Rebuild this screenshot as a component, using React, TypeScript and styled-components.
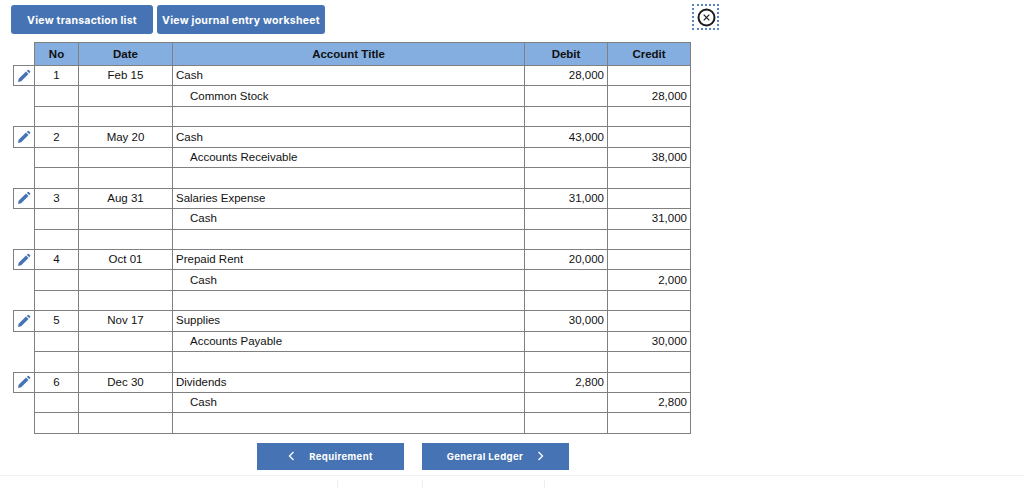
import React from 'react';
import styled, { createGlobalStyle } from 'styled-components';

const GlobalStyle = createGlobalStyle`
  html, body {
    margin: 0;
    padding: 0;
    background: #fff;
    font-family: 'Liberation Sans', Arial, sans-serif;
  }
`;

const Page = styled.div`
  width: 1024px;
  height: 488px;
  overflow: hidden;
  display: flex;
  flex-direction: column;
`;

const TopBar = styled.div`
  display: flex;
  align-items: flex-start;
  gap: 4px;
  padding: 5px 0 0 11px;
  height: 42px;
  box-sizing: border-box;
`;

const TopButton = styled.button<{ $w: number }>`
  width: ${(p) => p.$w}px;
  height: 29px;
  padding: 2px 0 0;
  border: none;
  border-radius: 3px;
  background: #4673b3;
  color: #fff;
  font-family: 'Inter', sans-serif;
  font-size: 10.5px;
  font-weight: 700;
  letter-spacing: 0.25px;
`;

const CloseBox = styled.button`
  width: 27px;
  height: 26px;
  margin: -1px 0 0 363px;
  padding: 0 0 0 1px;
  border: 2px dotted #5a86c0;
  background: #fff;
  display: flex;
  align-items: center;
  justify-content: center;
  box-sizing: border-box;
`;

const TableWrap = styled.div`
  padding-left: 13px;
`;

const Grid = styled.table`
  border-collapse: collapse;
  table-layout: fixed;
  width: 677px;
  font-size: 11.5px;
  color: #111;
`;

const Th = styled.th<{ $w: number }>`
  box-sizing: border-box;
  width: ${(p) => p.$w}px;
  height: 23px;
  padding: 0;
  background: #84aee0;
  border: 1px solid #808080;
  font-size: 11.5px;
  font-weight: 700;
  text-align: center;
`;

const Gutter = styled.th`
  box-sizing: border-box;
  width: 21px;
  padding: 0;
`;

const Row = styled.tr`
  height: 20.44px;
`;

const Td = styled.td<{ $align?: string; $indent?: boolean }>`
  padding: 0 ${(p) => (p.$align === 'right' ? '3px' : '0')} 0 ${(p) => (p.$indent ? '17px' : p.$align === 'left' ? '3px' : '0')};
  border: 1px solid #808080;
  text-align: ${(p) => p.$align || 'center'};
  white-space: nowrap;
  line-height: 13px;
`;

const PencilCell = styled.td<{ $show: boolean }>`
  padding: 0;
  border: ${(p) => (p.$show ? '1px solid #808080' : 'none')};
  text-align: center;
  line-height: 0;
`;

const Footer = styled.div`
  display: flex;
  gap: 18px;
  padding: 9px 0 0 257px;
`;

const NavButton = styled.button`
  width: 147px;
  height: 27px;
  padding: 0;
  border: none;
  background: #4673b3;
  color: #fff;
  font-family: 'Inter', sans-serif;
  font-size: 9.5px;
  font-weight: 700;
  letter-spacing: 0.4px;
  display: flex;
  align-items: center;
  justify-content: center;
  gap: 14px;
`;

const BottomStrip = styled.div`
  margin-top: 5px;
  border-top: 1px solid #f3f3f3;
  height: 12px;
  display: flex;
`;

const Tick = styled.div<{ $w: number }>`
  width: ${(p) => p.$w}px;
  box-sizing: border-box;
  margin-top: 4px;
  border-right: 1px solid #eeeeee;
`;

const Pencil = () => (
  <svg width="14" height="14" viewBox="0 0 14 14">
    <path d="M1 13l.7-3.2 7.3-7.3 2.5 2.5-7.3 7.3z" fill="#4673b3" />
    <path d="M9.8 1.8l.9-.9a.8.8 0 0 1 1.1 0l1.3 1.3a.8.8 0 0 1 0 1.1l-.9.9z" fill="#4673b3" />
  </svg>
);

const CloseIcon = () => (
  <svg width="19" height="19" viewBox="0 0 19 19">
    <circle cx="9.5" cy="9.5" r="8" fill="none" stroke="#1a1a1a" strokeWidth="2" />
    <path d="M6.7 6.7l5.6 5.6M12.3 6.7l-5.6 5.6" stroke="#1a1a1a" strokeWidth="1.2" />
  </svg>
);

const Chevron = ({ left }: { left?: boolean }) => (
  <svg width="7" height="10" viewBox="0 0 7 10">
    <path d={left ? 'M5.5 1L1.5 5l4 4' : 'M1.5 1l4 4-4 4'} fill="none" stroke="#fff" strokeWidth="1.3" />
  </svg>
);

const entries = [
  { no: 1, date: 'Feb 15', debitTitle: 'Cash', creditTitle: 'Common Stock', debit: '28,000', credit: '28,000' },
  { no: 2, date: 'May 20', debitTitle: 'Cash', creditTitle: 'Accounts Receivable', debit: '43,000', credit: '38,000' },
  { no: 3, date: 'Aug 31', debitTitle: 'Salaries Expense', creditTitle: 'Cash', debit: '31,000', credit: '31,000' },
  { no: 4, date: 'Oct 01', debitTitle: 'Prepaid Rent', creditTitle: 'Cash', debit: '20,000', credit: '2,000' },
  { no: 5, date: 'Nov 17', debitTitle: 'Supplies', creditTitle: 'Accounts Payable', debit: '30,000', credit: '30,000' },
  { no: 6, date: 'Dec 30', debitTitle: 'Dividends', creditTitle: 'Cash', debit: '2,800', credit: '2,800' },
];

export default function App() {
  return (
    <Page>
      <GlobalStyle />
      <TopBar>
        <TopButton $w={142}>View transaction list</TopButton>
        <TopButton $w={168}>View journal entry worksheet</TopButton>
        <CloseBox>
          <CloseIcon />
        </CloseBox>
      </TopBar>
      <TableWrap>
        <Grid>
          <thead>
            <tr>
              <Gutter />
              <Th $w={44}>No</Th>
              <Th $w={94}>Date</Th>
              <Th $w={352}>Account Title</Th>
              <Th $w={83}>Debit</Th>
              <Th $w={83}>Credit</Th>
            </tr>
          </thead>
          <tbody>
            {entries.map((entry) => (
              <React.Fragment key={entry.no}>
                <Row>
                  <PencilCell $show>
                    <Pencil />
                  </PencilCell>
                  <Td>{entry.no}</Td>
                  <Td>{entry.date}</Td>
                  <Td $align="left">{entry.debitTitle}</Td>
                  <Td $align="right">{entry.debit}</Td>
                  <Td $align="right" />
                </Row>
                <Row>
                  <PencilCell $show={false} />
                  <Td />
                  <Td />
                  <Td $align="left" $indent>{entry.creditTitle}</Td>
                  <Td $align="right" />
                  <Td $align="right">{entry.credit}</Td>
                </Row>
                <Row>
                  <PencilCell $show={false} />
                  <Td />
                  <Td />
                  <Td />
                  <Td />
                  <Td />
                </Row>
              </React.Fragment>
            ))}
          </tbody>
        </Grid>
      </TableWrap>
      <Footer>
        <NavButton>
          <Chevron left />
          Requirement
        </NavButton>
        <NavButton>
          General Ledger
          <Chevron />
        </NavButton>
      </Footer>
      <BottomStrip>
        <Tick $w={338} />
        <Tick $w={85} />
        <Tick $w={122} />
      </BottomStrip>
    </Page>
  );
}
